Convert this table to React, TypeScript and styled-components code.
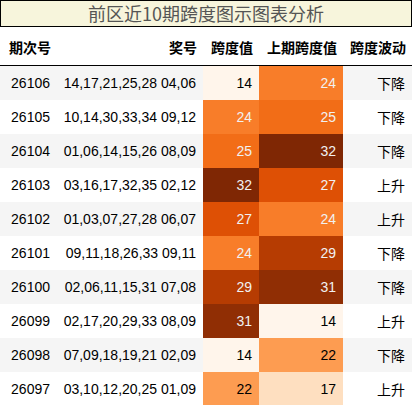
import React from 'react';
import styled, { createGlobalStyle } from 'styled-components';

const GlobalStyle = createGlobalStyle`
  body {
    margin: 0;
    background: #ffffff;
    font-family: "Liberation Sans", Arial, "Noto Sans CJK SC", sans-serif;
  }
`;

type Row = {
    issue: string;
    front: string;
    back: string;
    span: number;
    prev: number;
    trend: string;
};

const rows: Row[] = [
    { issue: '26106', front: '14,17,21,25,28', back: '04,06', span: 14, prev: 24, trend: '下降' },
    { issue: '26105', front: '10,14,30,33,34', back: '09,12', span: 24, prev: 25, trend: '下降' },
    { issue: '26104', front: '01,06,14,15,26', back: '08,09', span: 25, prev: 32, trend: '下降' },
    { issue: '26103', front: '03,16,17,32,35', back: '02,12', span: 32, prev: 27, trend: '上升' },
    { issue: '26102', front: '01,03,07,27,28', back: '06,07', span: 27, prev: 24, trend: '上升' },
    { issue: '26101', front: '09,11,18,26,33', back: '09,11', span: 24, prev: 29, trend: '下降' },
    { issue: '26100', front: '02,06,11,15,31', back: '07,08', span: 29, prev: 31, trend: '下降' },
    { issue: '26099', front: '02,17,20,29,33', back: '08,09', span: 31, prev: 14, trend: '上升' },
    { issue: '26098', front: '07,09,18,19,21', back: '02,09', span: 14, prev: 22, trend: '下降' },
    { issue: '26097', front: '03,10,12,20,25', back: '01,09', span: 22, prev: 17, trend: '上升' },
];

// matplotlib "Oranges"
const stops: number[][] = [
    [255, 245, 235],
    [254, 230, 206],
    [253, 208, 162],
    [253, 174, 107],
    [253, 141, 60],
    [241, 105, 19],
    [217, 72, 1],
    [166, 54, 3],
    [127, 39, 4],
];

function oranges(t: number) {
    const i = Math.min(255, Math.floor(t * 256)) / 255;
    const pos = i * (stops.length - 1);
    const k = Math.min(stops.length - 2, Math.floor(pos));
    const f = pos - k;
    const c = stops[k].map((v, j) => v + (stops[k + 1][j] - v) * f);
    return c;
}

function luminance(c: number[]) {
    const lin = c.map((v) => {
        const x = v / 255;
        return x <= 0.03928 ? x / 12.92 : Math.pow((x + 0.055) / 1.055, 2.4);
    });
    return 0.2126 * lin[0] + 0.7152 * lin[1] + 0.0722 * lin[2];
}

function cellStyle(v: number, min: number, max: number): React.CSSProperties {
    const c = oranges((v - min) / (max - min));
    const dark = luminance(c) < 0.408;
    return {
        backgroundColor: `rgb(${c.map((x) => Math.round(x)).join(',')})`,
        color: dark ? '#f1f1f1' : '#000000',
    };
}

const spanMin = Math.min(...rows.map((r) => r.span));
const spanMax = Math.max(...rows.map((r) => r.span));
const prevMin = Math.min(...rows.map((r) => r.prev));
const prevMax = Math.max(...rows.map((r) => r.prev));

function App() {
    return (
        <>
            <GlobalStyle />
            <Wrapper>
                <Caption>前区近10期跨度图示图表分析</Caption>
                <Table>
                    <colgroup>
                        <col style={{ width: 57 }} />
                        <col style={{ width: 146 }} />
                        <col style={{ width: 56 }} />
                        <col style={{ width: 84 }} />
                        <col style={{ width: 69 }} />
                    </colgroup>
                    <thead>
                        <tr>
                            <HeadCell>期次号</HeadCell>
                            <HeadCell>奖号</HeadCell>
                            <HeadCell>跨度值</HeadCell>
                            <HeadCell>上期跨度值</HeadCell>
                            <HeadCell>跨度波动</HeadCell>
                        </tr>
                    </thead>
                    <tbody>
                        {rows.map((r) => (
                            <BodyRow key={r.issue}>
                                <Cell>{r.issue}</Cell>
                                <Cell>{r.front} {r.back}</Cell>
                                <Cell style={cellStyle(r.span, spanMin, spanMax)}>{r.span}</Cell>
                                <Cell style={cellStyle(r.prev, prevMin, prevMax)}>{r.prev}</Cell>
                                <Cell $cjk>{r.trend}</Cell>
                            </BodyRow>
                        ))}
                    </tbody>
                </Table>
            </Wrapper>
        </>
    );
}

const Wrapper = styled.div`
    width: 412px;
`;

const Caption = styled.div`
    box-sizing: border-box;
    height: 27px;
    border: 1px solid #000000;
    background: #f7f5dc;
    color: #555555;
    font-family: "Noto Sans CJK SC", "Liberation Sans", sans-serif;
    font-size: 18px;
    line-height: 24px;
    text-align: center;
`;

const Table = styled.table`
    width: 412px;
    border-collapse: collapse;
    border-spacing: 0;
    table-layout: fixed;
`;

const HeadCell = styled.th`
    height: 36px;
    padding: 2px 6px 0 0;
    text-align: right;
    font-family: "Noto Sans CJK SC", sans-serif;
    font-size: 14px;
    font-weight: bold;
    color: #000000;
    border-bottom: 1px solid #000000;
    white-space: nowrap;
`;

const BodyRow = styled.tr`
    &:nth-child(odd) {
        background: #f5f5f5;
    }
`;

const Cell = styled.td<{ $cjk?: boolean }>`
    height: 34px;
    padding: 0 7px 0 0;
    text-align: right;
    font-family: ${(p) => (p.$cjk ? '"Noto Sans CJK SC", sans-serif' : '"Liberation Sans", Arial, sans-serif')};
    font-size: 14px;
    color: #000000;
    white-space: nowrap;
`;

export default App;
